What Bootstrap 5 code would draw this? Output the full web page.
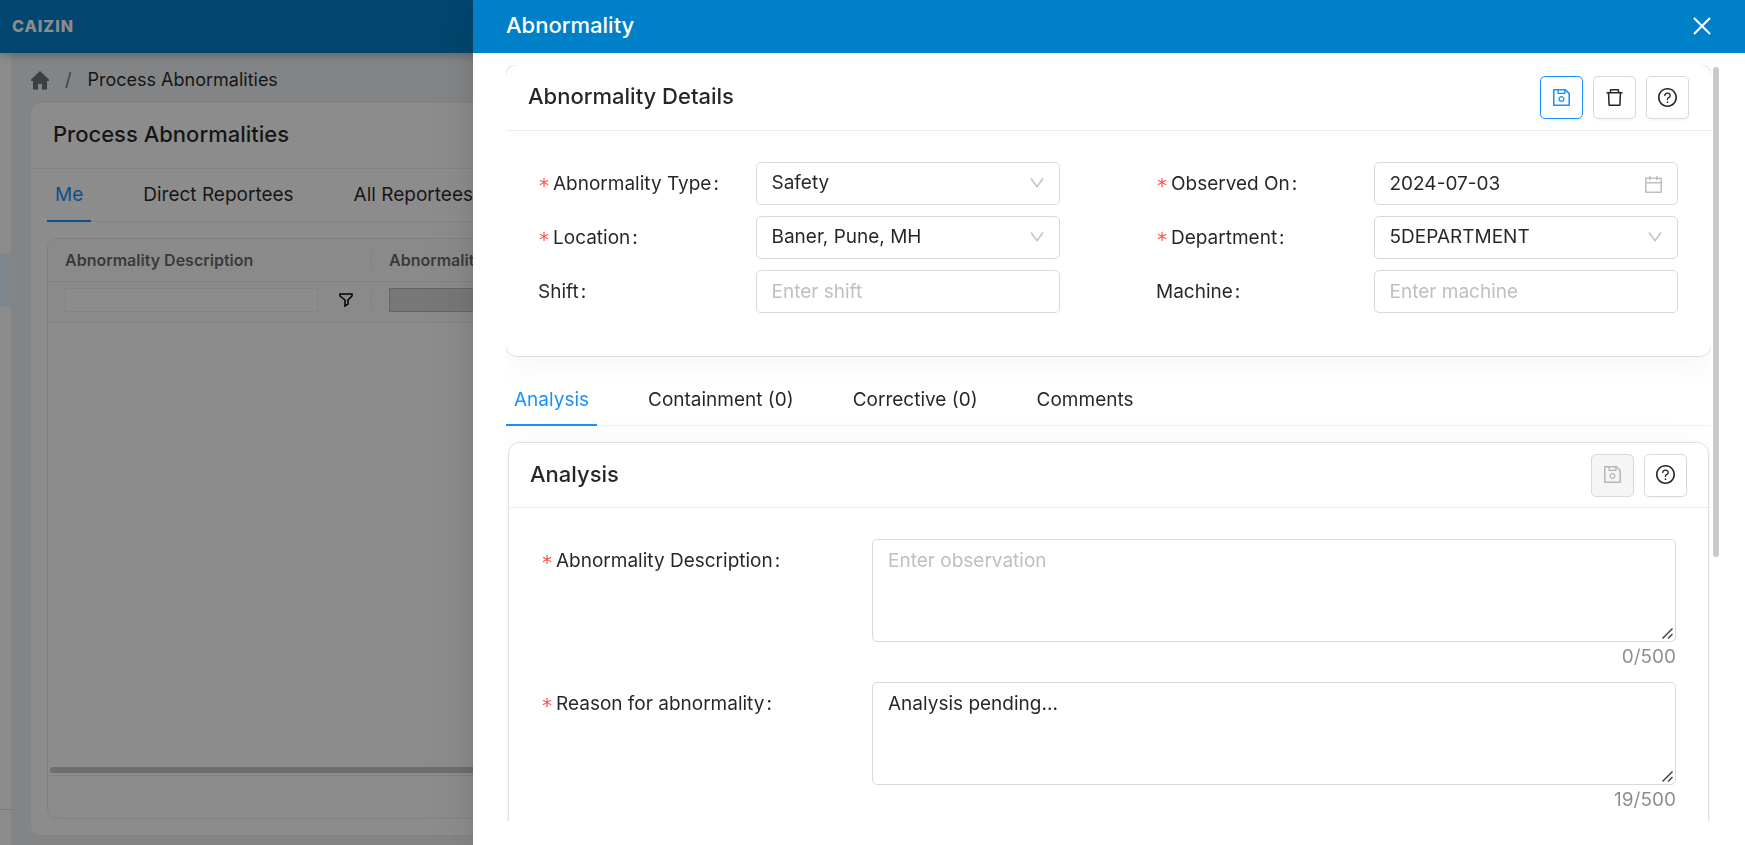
<!DOCTYPE html>
<html lang="en">
<head>
<meta charset="utf-8">
<meta name="viewport" content="width=device-width, initial-scale=1">
<title>Process Abnormalities</title>
<link href="https://cdn.jsdelivr.net/npm/bootstrap@5.3.0/dist/css/bootstrap.min.css" rel="stylesheet">
<style>
:root{--brand:#0080c8;--accent:#1890ff;--ink:rgba(0,0,0,.85);--line:#f0f0f0;--field:#d9d9d9}
body{font-family:Inter,"Liberation Sans",sans-serif;font-size:19px;line-height:28px;color:var(--ink);background:#eef0f3;height:100vh;overflow:hidden}
svg{fill:currentColor;display:block}
.topbar{height:53px;background:var(--brand);color:#fff;box-shadow:0 2px 8px rgba(0,0,0,.25);z-index:2;padding-bottom:2px}
.brand-name{font-size:16px;font-weight:800;letter-spacing:1px}
.siderail{width:11px;background:#fff;padding-top:200px;padding-bottom:35px}
.siderail a{height:54px;background:#e6f7ff}
.siderail hr{border-color:#d9d9d9;opacity:1}
.main-area{padding:0 20px 10px}
.crumbs{height:50px;padding-top:4px;font-size:18px}
.panel-title{font-size:22px;font-weight:450;line-height:32px;margin:0;padding-bottom:3px}
.panel{background:#fff;border-radius:10px}
.panel-head{height:66px;border-bottom:1px solid var(--line);padding:0 22px}
.tabline{border-bottom:1px solid var(--line);gap:44px}
.tabline .nav-link{color:var(--ink);padding:12px 8px 11px;border-bottom:2px solid transparent;margin-bottom:-1px}
.tabline .nav-link.active{color:var(--accent);border-color:var(--accent)}
.drawer .tabline{gap:43px}
.drawer .tabline .nav-link{padding:13px 8px 10px}
.grid-box{border:1px solid #ececec;border-radius:10px;overflow:hidden}
.grid-box table{table-layout:fixed;margin:0}
.grid-box th,.grid-box td{padding:0;border-bottom:1px solid #ececec;background:#fcfcfc}
.grid-box th{height:42px;font-size:16px;font-weight:600;color:rgba(0,0,0,.6);line-height:22px}
.grid-box td{height:41px;line-height:22px;vertical-align:middle;padding-bottom:3px}
.cell{padding-left:17px;height:22px;border-right:1px solid #ececec}
.cell input{height:24px;border:1px solid #f0f0f0;border-radius:0;padding:0 6px}
.cell input:disabled{background:#d9d9d9;border-color:#b8b8b8}
.filter-text{width:253px;margin-right:21px}
.h-thumb{height:6px;background:#c9c9c9;border-radius:3px;margin:0 2px 2px}
.grid-foot{height:43px;border-top:1px solid #ececec}
.offcanvas-backdrop.show{opacity:.45}
.offcanvas.drawer{width:calc(100% - 473px);border:0;color:var(--ink);box-shadow:-6px 0 16px -8px rgba(0,0,0,.08),-9px 0 28px rgba(0,0,0,.05),-12px 0 48px 16px rgba(0,0,0,.03)}
.drawer-head{height:53px;background:var(--brand);color:#fff;padding:0 32px 2px 33px}
.drawer-head h1{font-size:22px;line-height:32px;font-weight:500;margin:0;padding-bottom:2px}
.drawer-body{min-height:0;padding:12px 26px 24px 33px;gap:2px}
.scroll-area{overflow:hidden;min-width:0}
.v-track{width:6px;padding-top:2px}
.v-thumb{height:65%;background:#c9c9c9;border-radius:3px}
.sheet{background:#fff;border:1px solid #e0e0e0;border-radius:12px;box-shadow:0 4px 36px rgba(0,0,0,.05)}
.sheet-wide{margin:-1px -1px 0;padding-bottom:43px}
.sheet-inset{margin:16px 2px 0;box-shadow:0 0 4px rgba(0,0,0,.05),0 0 36px rgba(0,0,0,.03)}
.sheet-head{height:66px;border-bottom:1px solid #ececec;padding:0 22px;gap:10px}
.sheet-inset .sheet-head{height:65px;padding:0 21px}
.tool{width:43px;height:43px;padding:0 0 1px;display:flex;align-items:center;justify-content:center;background:#fff;border:1px solid var(--field);border-radius:5px;color:var(--ink);box-shadow:0 2px 2px rgba(0,0,0,.03)}
.tool.primary{border-color:var(--accent);color:var(--accent)}
.tool:disabled{background:#f5f5f5;color:rgba(0,0,0,.25);opacity:1;border-color:var(--field);box-shadow:none}
.detail-form{padding:31px 33px 0 32px;display:grid;grid-template-columns:1fr 1fr;gap:11px 96px}
.analysis-form{padding:31px 32px 0;display:grid;gap:11px}
.analysis-form .field-label{width:331px;padding-top:7px}
.field-label{display:flex;align-items:center;height:28px}
.req{color:#ff4d4f;font:20px/18px "DejaVu Sans Mono",monospace;width:15px;height:16px}
.colon{margin-left:2px}
.box.form-control,.box.form-select{font:inherit;color:var(--ink);height:43px;border:1px solid var(--field);border-radius:5px;padding:6px 15px;background:#fff;appearance:none}
.box.form-select{padding:5px 15px 7px}
textarea.box.form-control{height:103px;display:block;padding-top:7px}
.box::placeholder{color:#bfbfbf!important}
.box-icon{position:absolute;right:15px;top:13px;color:rgba(0,0,0,.25);pointer-events:none}
.grip{position:absolute;right:2px;bottom:2px;pointer-events:none}
.counter{color:rgba(0,0,0,.45);text-align:right;line-height:29px;height:29px}
</style>
</head>
<body class="d-flex flex-column">
<svg class="d-none" aria-hidden="true">
<symbol id="i-save" viewBox="64 64 896 896"><path d="M893.3 293.3L730.7 130.7c-7.5-7.5-16.7-13-26.7-16V112H144c-17.7 0-32 14.3-32 32v736c0 17.7 14.3 32 32 32h736c17.7 0 32-14.3 32-32V338.5c0-17-6.7-33.2-18.7-45.2zM384 184h256v104H384V184zm456 656H184V184h136v136c0 17.7 14.3 32 32 32h320c17.7 0 32-14.3 32-32V205.8l136 136V840zM512 442c-79.5 0-144 64.5-144 144s64.5 144 144 144 144-64.5 144-144-64.5-144-144-144zm0 224c-44.2 0-80-35.8-80-80s35.8-80 80-80 80 35.8 80 80-35.8 80-80 80z"/></symbol>
<symbol id="i-trash" viewBox="64 64 896 896"><path d="M360 184h-8c4.4 0 8-3.6 8-8v8h304v-8c0 4.4 3.6 8 8 8h-8v72h72v-80c0-35.3-28.7-64-64-64H352c-35.3 0-64 28.7-64 64v80h72v-72zm504 72H160c-17.7 0-32 14.3-32 32v32c0 4.4 3.6 8 8 8h60.4l24.7 523c1.6 34.1 29.8 61 63.9 61h454c34.2 0 62.3-26.8 63.9-61l24.7-523H888c4.4 0 8-3.6 8-8v-32c0-17.7-14.3-32-32-32zM731.3 840H292.7l-24.2-512h487l-24.2 512z"/></symbol>
<symbol id="i-help" viewBox="64 64 896 896"><path d="M512 64C264.6 64 64 264.6 64 512s200.6 448 448 448 448-200.6 448-448S759.4 64 512 64zm0 820c-205.4 0-372-166.6-372-372s166.6-372 372-372 372 166.6 372 372-166.6 372-372 372z"/><path d="M623.6 316.7C593.6 290.4 554 276 512 276s-81.6 14.5-111.6 40.7C369.2 344 352 380.7 352 420v7.6c0 4.4 3.6 8 8 8h48c4.4 0 8-3.6 8-8V420c0-44.1 43.1-80 96-80s96 35.9 96 80c0 31.1-22 59.6-56.1 72.7-21.2 8.1-39.2 22.3-52.1 40.9-13.1 19-19.9 41.8-19.9 64.9V620c0 4.4 3.6 8 8 8h48c4.4 0 8-3.6 8-8v-22.7a48.3 48.3 0 0130.9-44.8c59-22.7 97.1-74.7 97.1-132.5.1-39.3-17.1-76-48.3-103.3zM472 732a40 40 0 1080 0 40 40 0 10-80 0z"/></symbol>
<symbol id="i-cal" viewBox="64 64 896 896"><path d="M880 184H712v-64c0-4.400-3.600-8-8-8h-56c-4.400 0-8 3.600-8 8v64H384v-64c0-4.400-3.600-8-8-8h-56c-4.400 0-8 3.600-8 8v64H144c-17.700 0-32 14.300-32 32v664c0 17.700 14.300 32 32 32h736c17.700 0 32-14.300 32-32V216c0-17.700-14.300-32-32-32zm-40 656H184V460h656v380zM184 392V256h128v48c0 4.400 3.600 8 8 8h56c4.400 0 8-3.600 8-8v-48h256v48c0 4.400 3.600 8 8 8h56c4.400 0 8-3.600 8-8v-48h128v136H184z"/></symbol>
<symbol id="i-down" viewBox="64 64 896 896"><path d="M884 256h-75c-5.100 0-9.900 2.500-12.900 6.600L512 654.200 227.900 262.600c-3-4.100-7.800-6.600-12.900-6.600h-75c-6.500 0-10.300 7.400-6.500 12.700l352.600 486.100c12.800 17.600 39 17.600 51.700 0l352.600-486.100c3.900-5.300.1-12.700-6.400-12.700z"/></symbol>
<symbol id="i-grip" viewBox="0 0 13 13"><path d="M0 0H13V13H0Z" fill="#fff"/><path d="M1.500 11.500 11.500 1.500M7 11.500 11.500 7" stroke="#444" stroke-width="1.500" fill="none"/></symbol>
</svg>

<header class="topbar d-flex align-items-center px-2 flex-shrink-0 position-relative"><span class="brand-name ms-1">CAIZIN</span></header>
<div class="d-flex flex-grow-1">
  <nav class="siderail d-flex flex-column justify-content-between flex-shrink-0" aria-label="Main">
    <a href="#" aria-label="Process Abnormalities"></a><hr class="m-0">
  </nav>
  <main class="main-area flex-grow-1 d-flex flex-column">
    <nav class="crumbs d-flex align-items-center" aria-label="Breadcrumb">
      <a href="#" aria-label="Home" class="text-secondary"><svg width="18" height="19" viewBox="0 0 18 19"><path d="M9 0 18 8.500V10H16V18.500H11V13H7V18.500H2V10H0V8.500Z"/></svg></a>
      <span class="text-secondary mx-3">/</span><span>Process Abnormalities</span>
    </nav>
    <section class="panel flex-grow-1 d-flex flex-column">
      <div class="panel-head d-flex align-items-center"><h2 class="panel-title">Process Abnormalities</h2></div>
      <div class="px-3 pb-3 flex-grow-1 d-flex flex-column">
        <ul class="nav tabline flex-nowrap mb-3">
          <li><a class="nav-link active" href="#">Me</a></li>
          <li><a class="nav-link" href="#">Direct Reportees</a></li>
          <li><a class="nav-link" href="#">All Reportees</a></li>
        </ul>
        <div class="grid-box flex-grow-1 d-flex flex-column">
          <table class="w-100">
            <colgroup><col width="324"><col></colgroup>
            <thead><tr><th scope="col"><div class="cell">Abnormality Description</div></th><th scope="col"><div class="cell">Abnormality Type</div></th></tr></thead>
            <tbody><tr>
              <td><div class="cell d-flex align-items-center"><input class="form-control filter-text" aria-label="Filter description"><svg class="text-black flex-shrink-0" width="14" height="14" viewBox="0 0 14 14"><path d="M1 1H13V3L9 7V11L6 13V7L1 3Z" fill="none" stroke="currentColor" stroke-width="1.500"/></svg></div></td>
              <td><div class="cell d-flex align-items-center"><input class="form-control w-25" aria-label="Filter type" disabled></div></td>
            </tr></tbody>
          </table>
          <div class="h-thumb mt-auto"></div>
          <div class="grid-foot"></div>
        </div>
      </div>
    </section>
  </main>
</div>

<div class="offcanvas-backdrop show"></div>
<aside class="offcanvas offcanvas-end show drawer" data-bs-backdrop="false" data-bs-scroll="true" tabindex="-1" aria-labelledby="drawerTitle">
  <div class="drawer-head d-flex align-items-center justify-content-between flex-shrink-0">
    <h1 id="drawerTitle">Abnormality</h1>
    <button class="btn p-0 border-0 text-white" type="button" aria-label="Close"><svg width="22" height="22" viewBox="0 0 22 22"><path d="M3 3 19 19M19 3 3 19" stroke="currentColor" stroke-width="2"/></svg></button>
  </div>
  <div class="drawer-body d-flex flex-grow-1">
    <div class="scroll-area flex-grow-1">
      <section class="sheet sheet-wide">
        <div class="sheet-head d-flex align-items-center">
          <h2 class="panel-title me-auto">Abnormality Details</h2>
          <button class="btn tool primary" type="button" aria-label="Save"><svg width="19" height="19"><use href="#i-save"/></svg></button>
          <button class="btn tool" type="button" aria-label="Delete"><svg width="19" height="19"><use href="#i-trash"/></svg></button>
          <button class="btn tool" type="button" aria-label="Help"><svg width="19" height="19"><use href="#i-help"/></svg></button>
        </div>
        <form class="detail-form">
          <div class="row g-0 align-items-center"><label class="col-5 field-label" for="type"><span class="req">*</span>Abnormality Type<span class="colon">:</span></label>
            <div class="col-7 position-relative"><select class="form-select box" id="type"><option>Safety</option></select><svg class="box-icon" width="16" height="16"><use href="#i-down"/></svg></div></div>
          <div class="row g-0 align-items-center"><label class="col-5 field-label" for="date"><span class="req">*</span>Observed On<span class="colon">:</span></label>
            <div class="col-7 position-relative"><input class="form-control box" id="date" value="2024-07-03"><svg class="box-icon" width="19" height="19"><use href="#i-cal"/></svg></div></div>
          <div class="row g-0 align-items-center"><label class="col-5 field-label" for="loc"><span class="req">*</span>Location<span class="colon">:</span></label>
            <div class="col-7 position-relative"><select class="form-select box" id="loc"><option>Baner, Pune, MH</option></select><svg class="box-icon" width="16" height="16"><use href="#i-down"/></svg></div></div>
          <div class="row g-0 align-items-center"><label class="col-5 field-label" for="dept"><span class="req">*</span>Department<span class="colon">:</span></label>
            <div class="col-7 position-relative"><select class="form-select box" id="dept"><option>5DEPARTMENT</option></select><svg class="box-icon" width="16" height="16"><use href="#i-down"/></svg></div></div>
          <div class="row g-0 align-items-center"><label class="col-5 field-label" for="shift">Shift<span class="colon">:</span></label>
            <div class="col-7"><input class="form-control box" id="shift" placeholder="Enter shift"></div></div>
          <div class="row g-0 align-items-center"><label class="col-5 field-label" for="machine">Machine<span class="colon">:</span></label>
            <div class="col-7"><input class="form-control box" id="machine" placeholder="Enter machine"></div></div>
        </form>
      </section>
      <ul class="nav tabline mt-3">
        <li><a class="nav-link active" href="#">Analysis</a></li>
        <li><a class="nav-link" href="#">Containment (0)</a></li>
        <li><a class="nav-link" href="#">Corrective (0)</a></li>
        <li><a class="nav-link" href="#">Comments</a></li>
      </ul>
      <section class="sheet sheet-inset pb-5">
        <div class="sheet-head d-flex align-items-center">
          <h2 class="panel-title me-auto">Analysis</h2>
          <button class="btn tool" type="button" aria-label="Save analysis" disabled><svg width="19" height="19"><use href="#i-save"/></svg></button>
          <button class="btn tool" type="button" aria-label="Analysis help"><svg width="19" height="19"><use href="#i-help"/></svg></button>
        </div>
        <form class="analysis-form">
          <div class="d-flex"><label class="field-label flex-shrink-0 mt-1" for="desc"><span class="req">*</span>Abnormality Description<span class="colon">:</span></label>
            <div class="flex-grow-1"><div class="position-relative"><textarea class="form-control box" id="desc" placeholder="Enter observation"></textarea><svg class="grip" width="13" height="13"><use href="#i-grip"/></svg></div><div class="counter">0/500</div></div></div>
          <div class="d-flex"><label class="field-label flex-shrink-0 mt-1" for="reason"><span class="req">*</span>Reason for abnormality<span class="colon">:</span></label>
            <div class="flex-grow-1"><div class="position-relative"><textarea class="form-control box" id="reason">Analysis pending...</textarea><svg class="grip" width="13" height="13"><use href="#i-grip"/></svg></div><div class="counter">19/500</div></div></div>
        </form>
      </section>
    </div>
    <div class="v-track" aria-hidden="true"><div class="v-thumb"></div></div>
  </div>
</aside>
<script src="https://cdn.jsdelivr.net/npm/bootstrap@5.3.0/dist/js/bootstrap.bundle.min.js"></script>
</body>
</html>
